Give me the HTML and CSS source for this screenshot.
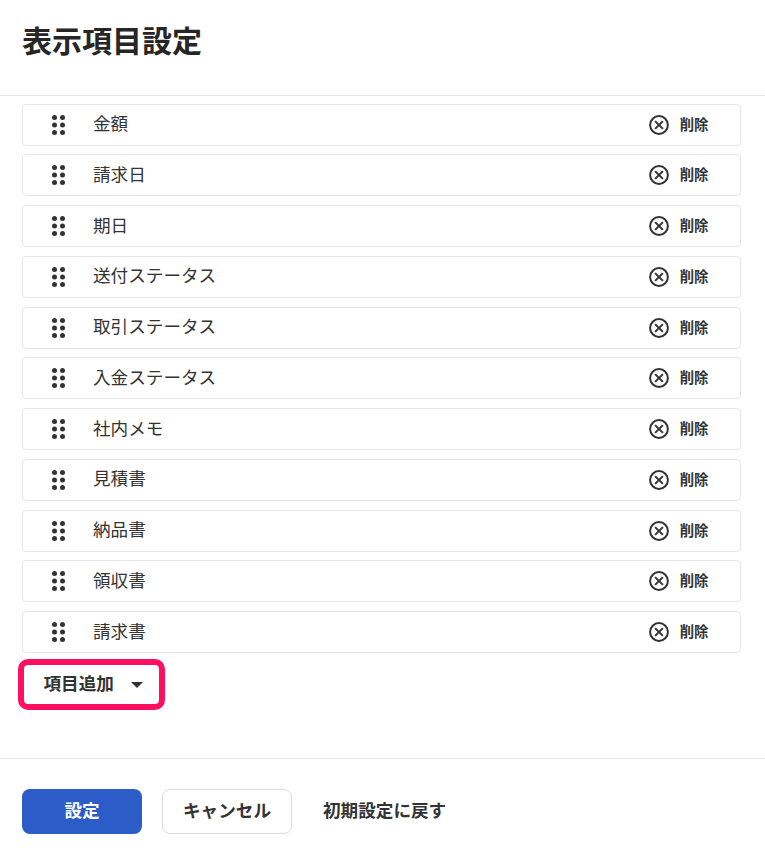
FILE: index.html
```html
<!DOCTYPE html>
<html lang="ja">
<head>
	<meta charset="UTF-8">
	<title>表示項目設定</title>
	<link rel="stylesheet" href="styles.css">
</head>
<body>
	<section class="dialog">
		<header class="dialog_head">
			<h1>表示項目設定</h1>
		</header>
		<section class="dialog_body">
			<ul class="item_list">
				<li>
					<svg class="handle" viewBox="0 0 13 20"><circle cx="2.5" cy="2.6" r="2.5"/><circle cx="10.5" cy="2.6" r="2.5"/><circle cx="2.5" cy="10" r="2.5"/><circle cx="10.5" cy="10" r="2.5"/><circle cx="2.5" cy="17.4" r="2.5"/><circle cx="10.5" cy="17.4" r="2.5"/></svg>
					<span class="name">金額</span>
					<svg class="del_icon" viewBox="0 0 20 20"><circle cx="10" cy="10" r="8.9"/><path d="M6.1 6.1l7.8 7.8M13.9 6.1l-7.8 7.8"/></svg>
					<span class="del">削除</span>
				</li>
				<li>
					<svg class="handle" viewBox="0 0 13 20"><circle cx="2.5" cy="2.6" r="2.5"/><circle cx="10.5" cy="2.6" r="2.5"/><circle cx="2.5" cy="10" r="2.5"/><circle cx="10.5" cy="10" r="2.5"/><circle cx="2.5" cy="17.4" r="2.5"/><circle cx="10.5" cy="17.4" r="2.5"/></svg>
					<span class="name">請求日</span>
					<svg class="del_icon" viewBox="0 0 20 20"><circle cx="10" cy="10" r="8.9"/><path d="M6.1 6.1l7.8 7.8M13.9 6.1l-7.8 7.8"/></svg>
					<span class="del">削除</span>
				</li>
				<li>
					<svg class="handle" viewBox="0 0 13 20"><circle cx="2.5" cy="2.6" r="2.5"/><circle cx="10.5" cy="2.6" r="2.5"/><circle cx="2.5" cy="10" r="2.5"/><circle cx="10.5" cy="10" r="2.5"/><circle cx="2.5" cy="17.4" r="2.5"/><circle cx="10.5" cy="17.4" r="2.5"/></svg>
					<span class="name">期日</span>
					<svg class="del_icon" viewBox="0 0 20 20"><circle cx="10" cy="10" r="8.9"/><path d="M6.1 6.1l7.8 7.8M13.9 6.1l-7.8 7.8"/></svg>
					<span class="del">削除</span>
				</li>
				<li>
					<svg class="handle" viewBox="0 0 13 20"><circle cx="2.5" cy="2.6" r="2.5"/><circle cx="10.5" cy="2.6" r="2.5"/><circle cx="2.5" cy="10" r="2.5"/><circle cx="10.5" cy="10" r="2.5"/><circle cx="2.5" cy="17.4" r="2.5"/><circle cx="10.5" cy="17.4" r="2.5"/></svg>
					<span class="name">送付ステータス</span>
					<svg class="del_icon" viewBox="0 0 20 20"><circle cx="10" cy="10" r="8.9"/><path d="M6.1 6.1l7.8 7.8M13.9 6.1l-7.8 7.8"/></svg>
					<span class="del">削除</span>
				</li>
				<li>
					<svg class="handle" viewBox="0 0 13 20"><circle cx="2.5" cy="2.6" r="2.5"/><circle cx="10.5" cy="2.6" r="2.5"/><circle cx="2.5" cy="10" r="2.5"/><circle cx="10.5" cy="10" r="2.5"/><circle cx="2.5" cy="17.4" r="2.5"/><circle cx="10.5" cy="17.4" r="2.5"/></svg>
					<span class="name">取引ステータス</span>
					<svg class="del_icon" viewBox="0 0 20 20"><circle cx="10" cy="10" r="8.9"/><path d="M6.1 6.1l7.8 7.8M13.9 6.1l-7.8 7.8"/></svg>
					<span class="del">削除</span>
				</li>
				<li>
					<svg class="handle" viewBox="0 0 13 20"><circle cx="2.5" cy="2.6" r="2.5"/><circle cx="10.5" cy="2.6" r="2.5"/><circle cx="2.5" cy="10" r="2.5"/><circle cx="10.5" cy="10" r="2.5"/><circle cx="2.5" cy="17.4" r="2.5"/><circle cx="10.5" cy="17.4" r="2.5"/></svg>
					<span class="name">入金ステータス</span>
					<svg class="del_icon" viewBox="0 0 20 20"><circle cx="10" cy="10" r="8.9"/><path d="M6.1 6.1l7.8 7.8M13.9 6.1l-7.8 7.8"/></svg>
					<span class="del">削除</span>
				</li>
				<li>
					<svg class="handle" viewBox="0 0 13 20"><circle cx="2.5" cy="2.6" r="2.5"/><circle cx="10.5" cy="2.6" r="2.5"/><circle cx="2.5" cy="10" r="2.5"/><circle cx="10.5" cy="10" r="2.5"/><circle cx="2.5" cy="17.4" r="2.5"/><circle cx="10.5" cy="17.4" r="2.5"/></svg>
					<span class="name">社内メモ</span>
					<svg class="del_icon" viewBox="0 0 20 20"><circle cx="10" cy="10" r="8.9"/><path d="M6.1 6.1l7.8 7.8M13.9 6.1l-7.8 7.8"/></svg>
					<span class="del">削除</span>
				</li>
				<li>
					<svg class="handle" viewBox="0 0 13 20"><circle cx="2.5" cy="2.6" r="2.5"/><circle cx="10.5" cy="2.6" r="2.5"/><circle cx="2.5" cy="10" r="2.5"/><circle cx="10.5" cy="10" r="2.5"/><circle cx="2.5" cy="17.4" r="2.5"/><circle cx="10.5" cy="17.4" r="2.5"/></svg>
					<span class="name">見積書</span>
					<svg class="del_icon" viewBox="0 0 20 20"><circle cx="10" cy="10" r="8.9"/><path d="M6.1 6.1l7.8 7.8M13.9 6.1l-7.8 7.8"/></svg>
					<span class="del">削除</span>
				</li>
				<li>
					<svg class="handle" viewBox="0 0 13 20"><circle cx="2.5" cy="2.6" r="2.5"/><circle cx="10.5" cy="2.6" r="2.5"/><circle cx="2.5" cy="10" r="2.5"/><circle cx="10.5" cy="10" r="2.5"/><circle cx="2.5" cy="17.4" r="2.5"/><circle cx="10.5" cy="17.4" r="2.5"/></svg>
					<span class="name">納品書</span>
					<svg class="del_icon" viewBox="0 0 20 20"><circle cx="10" cy="10" r="8.9"/><path d="M6.1 6.1l7.8 7.8M13.9 6.1l-7.8 7.8"/></svg>
					<span class="del">削除</span>
				</li>
				<li>
					<svg class="handle" viewBox="0 0 13 20"><circle cx="2.5" cy="2.6" r="2.5"/><circle cx="10.5" cy="2.6" r="2.5"/><circle cx="2.5" cy="10" r="2.5"/><circle cx="10.5" cy="10" r="2.5"/><circle cx="2.5" cy="17.4" r="2.5"/><circle cx="10.5" cy="17.4" r="2.5"/></svg>
					<span class="name">領収書</span>
					<svg class="del_icon" viewBox="0 0 20 20"><circle cx="10" cy="10" r="8.9"/><path d="M6.1 6.1l7.8 7.8M13.9 6.1l-7.8 7.8"/></svg>
					<span class="del">削除</span>
				</li>
				<li>
					<svg class="handle" viewBox="0 0 13 20"><circle cx="2.5" cy="2.6" r="2.5"/><circle cx="10.5" cy="2.6" r="2.5"/><circle cx="2.5" cy="10" r="2.5"/><circle cx="10.5" cy="10" r="2.5"/><circle cx="2.5" cy="17.4" r="2.5"/><circle cx="10.5" cy="17.4" r="2.5"/></svg>
					<span class="name">請求書</span>
					<svg class="del_icon" viewBox="0 0 20 20"><circle cx="10" cy="10" r="8.9"/><path d="M6.1 6.1l7.8 7.8M13.9 6.1l-7.8 7.8"/></svg>
					<span class="del">削除</span>
				</li>
			</ul>
			<div class="add_mark">
				<span class="add_label">項目追加</span>
				<span class="add_arrow"></span>
			</div>
		</section>
		<footer class="dialog_foot">
			<span class="btn btn_primary">設定</span>
			<span class="btn btn_cancel">キャンセル</span>
			<span class="btn_text">初期設定に戻す</span>
		</footer>
	</section>
</body>
</html>
```

FILE: styles.css
```css
*{margin:0;padding:0;box-sizing:border-box}
li{list-style: none}
html,body{
	width: 765px;
	height: 852px;
	overflow: hidden;
	background: #fff;
}
body{
	font-family: "Noto Sans CJK JP","Liberation Sans",sans-serif;
	color: #333;
}
.dialog{
	display: flex;
	flex-direction: column;
	height: 852px;
}
.dialog_head{
	height: 96px;
	padding: 19px 22px 0;
	border-bottom: 1px solid #e6e6e6;
}
.dialog_head h1{
	font-size: 30px;
	line-height: 40px;
	font-weight: 700;
	color: #262626;
}
.dialog_body{
	height: 662px;
	padding: 7.7px 24px 0 22px;
}
.item_list{
	display: flex;
	flex-direction: column;
	gap: 8.75px;
}
.item_list li{
	display: flex;
	align-items: center;
	height: 42px;
	padding: 0 31.5px 0 29px;
	border: 1px solid #e6e6e6;
	border-radius: 4px;
}
.handle{
	width: 13px;
	height: 20px;
	fill: #333;
}
.name{
	flex: 1;
	margin-left: 28px;
	margin-top: -3px;
	font-size: 17.6px;
	line-height: 24px;
}
.del_icon{
	width: 20px;
	height: 20px;
	fill: none;
	stroke: #333;
	stroke-width: 2;
}
.del{
	margin-left: 11px;
	margin-top: -2px;
	font-size: 14.4px;
	line-height: 20px;
	font-weight: 700;
}
.add_mark{
	display: flex;
	align-items: center;
	width: 147px;
	height: 51px;
	margin: 5.8px 0 0 -4px;
	padding: 0 0 2px 19.5px;
	border: 6px solid #ff0f5f;
	border-radius: 10px;
}
.add_label{
	font-size: 17.6px;
	line-height: 24px;
	font-weight: 700;
}
.add_arrow{
	width: 0;
	height: 0;
	margin: 3px 0 0 17.5px;
	border-left: 6px solid transparent;
	border-right: 6px solid transparent;
	border-top: 6px solid #333;
}
.dialog_foot{
	display: flex;
	align-items: center;
	height: 94px;
	padding: 11px 22px 0;
	border-top: 1px solid #e6e6e6;
}
.btn{
	display: flex;
	justify-content: center;
	align-items: center;
	height: 45px;
	padding-bottom: 4px;
	border-radius: 8px;
	font-size: 17.6px;
	font-weight: 700;
}
.btn_primary{
	width: 120px;
	background: #2b5cc8;
	color: #fff;
}
.btn_cancel{
	width: 130px;
	margin-left: 20px;
	border: 1px solid #dcdcdc;
}
.btn_text{
	margin-left: 31px;
	padding-bottom: 4px;
	font-size: 17.6px;
	font-weight: 700;
}
```
